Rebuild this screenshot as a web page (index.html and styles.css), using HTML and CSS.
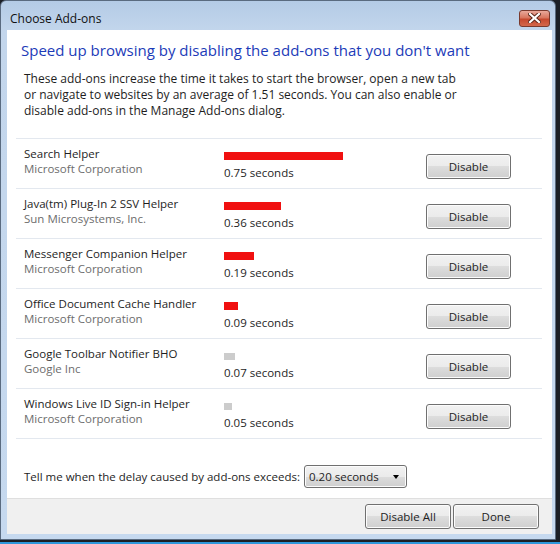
FILE: index.html
```html
<!DOCTYPE html>
<html lang="en">
<head>
    <meta charset="UTF-8">
    <title>Choose Add-ons</title>
    <link rel="stylesheet" href="styles.css">
</head>
<body>
    <div class="window">
        <div class="titlebar">
            <span class="title">Choose Add-ons</span>
            <button class="close-btn" title="Close">
                <svg width="13" height="10" viewBox="0 0 13 10">
                    <path d="M2 1 L11 9 M11 1 L2 9" stroke="#5a2418" stroke-width="4" stroke-linecap="square"/>
                    <path d="M2 1 L11 9 M11 1 L2 9" stroke="#ffffff" stroke-width="2.2" stroke-linecap="square"/>
                </svg>
            </button>
        </div>

        <div class="client">
            <div class="content">
                <h1 class="instruction">Speed up browsing by disabling the add-ons that you don't want</h1>
                <p class="desc">These add-ons increase the time it takes to start the browser, open a new tab or navigate to websites by an average of 1.51 seconds. You can also enable or disable add-ons in the Manage Add-ons dialog.</p>

                <div class="addons">
                    <div class="addon">
                        <div class="info">
                            <div class="name">Search Helper</div>
                            <div class="company">Microsoft Corporation</div>
                        </div>
                        <div class="timing">
                            <div class="bar slow" style="width: 119px"></div>
                            <div class="secs">0.75 seconds</div>
                        </div>
                        <button class="btn">Disable</button>
                    </div>
                    <div class="addon">
                        <div class="info">
                            <div class="name">Java(tm) Plug-In 2 SSV Helper</div>
                            <div class="company">Sun Microsystems, Inc.</div>
                        </div>
                        <div class="timing">
                            <div class="bar slow" style="width: 57px"></div>
                            <div class="secs">0.36 seconds</div>
                        </div>
                        <button class="btn">Disable</button>
                    </div>
                    <div class="addon">
                        <div class="info">
                            <div class="name">Messenger Companion Helper</div>
                            <div class="company">Microsoft Corporation</div>
                        </div>
                        <div class="timing">
                            <div class="bar slow" style="width: 30px"></div>
                            <div class="secs">0.19 seconds</div>
                        </div>
                        <button class="btn">Disable</button>
                    </div>
                    <div class="addon">
                        <div class="info">
                            <div class="name">Office Document Cache Handler</div>
                            <div class="company">Microsoft Corporation</div>
                        </div>
                        <div class="timing">
                            <div class="bar slow" style="width: 14px"></div>
                            <div class="secs">0.09 seconds</div>
                        </div>
                        <button class="btn">Disable</button>
                    </div>
                    <div class="addon">
                        <div class="info">
                            <div class="name">Google Toolbar Notifier BHO</div>
                            <div class="company">Google Inc</div>
                        </div>
                        <div class="timing">
                            <div class="bar fast" style="width: 11px"></div>
                            <div class="secs">0.07 seconds</div>
                        </div>
                        <button class="btn">Disable</button>
                    </div>
                    <div class="addon">
                        <div class="info">
                            <div class="name">Windows Live ID Sign-in Helper</div>
                            <div class="company">Microsoft Corporation</div>
                        </div>
                        <div class="timing">
                            <div class="bar fast" style="width: 8px"></div>
                            <div class="secs">0.05 seconds</div>
                        </div>
                        <button class="btn">Disable</button>
                    </div>
                </div>

                <div class="threshold">
                    <span>Tell me when the delay caused by add-ons exceeds:</span>
                    <div class="dropdown">
                        <span>0.20 seconds</span>
                        <span class="arrow"></span>
                    </div>
                </div>
            </div>

            <div class="footer">
                <button class="btn wide">Disable All</button>
                <button class="btn wide">Done</button>
            </div>
        </div>
    </div>
</body>
</html>
```

FILE: styles.css
```css
body {
    margin: 0;
    width: 560px;
    height: 544px;
    overflow: hidden;
    background: linear-gradient(to bottom, #1b1f26 0, #1b1f26 542px, #2e98dc 542px);
    font-family: "Open Sans", "Noto Sans", sans-serif;
    font-size: 11.5px;
    color: #1e1e1e;
}
.window {
    width: 556px;
    height: 540px;
    border: 1px solid #5a6b80;
    border-radius: 6px 6px 0 0;
    background: linear-gradient(to bottom, #b4cbe6 0, #c3d6ec 30px, #c6d9ef 100%);
    padding: 0 3px 5px 6px;
    box-sizing: border-box;
    display: flex;
    flex-direction: column;
}
.titlebar {
    height: 29px;
    display: flex;
    align-items: center;
    justify-content: space-between;
}
.title {
    font-size: 12px;
    margin-left: 3px;
    margin-top: 5px;
    color: #101010;
}
.close-btn {
    width: 31px;
    height: 17px;
    margin-top: 5px;
    margin-right: 2px;
    padding: 0;
    border: 1px solid #7a3a2e;
    border-radius: 3px;
    background: linear-gradient(to bottom, #e9a99b 0, #d8765f 45%, #c6492f 55%, #d3684c 100%);
    display: flex;
    align-items: center;
    justify-content: center;
}
.client {
    flex: 1;
    background: #ffffff;
    display: flex;
    flex-direction: column;
}
.content {
    flex: 1;
    padding: 0 10px 0 9px;
}
.instruction {
    margin: 10px 0 0 5px;
    font-size: 15px;
    font-weight: normal;
    line-height: 21px;
    color: #1c3bb8;
}
.desc {
    margin: 10px 0 19px 8px;
    font-size: 12px;
    line-height: 16px;
    width: 442px;
}
.addons {
    border-top: 1px solid #e3e8ef;
}
.addon {
    display: grid;
    grid-template-columns: 200px 202px 85px;
    height: 49px;
    border-bottom: 1px solid #e3e8ef;
    padding-left: 8px;
}
.info {
    padding-top: 7px;
    line-height: 15px;
}
.company {
    color: #6d6d6d;
}
.timing {
    padding-top: 13px;
}
.bar {
    height: 8px;
}
.bar.slow {
    background: #f01010;
}
.bar.fast {
    background: #cccccc;
    height: 7px;
    margin-top: 1px;
}
.secs {
    margin-top: 5px;
    line-height: 15px;
}
.btn {
    font-family: inherit;
    font-size: 11.5px;
    color: #1e1e1e;
    height: 25px;
    margin-top: 15px;
    padding: 0;
    border: 1px solid #707070;
    border-radius: 3px;
    background: linear-gradient(to bottom, #f2f2f2 0, #ebebeb 50%, #dddddd 50%, #cfcfcf 100%);
    box-shadow: inset 0 0 0 1px #fcfcfc;
}
.threshold {
    display: flex;
    align-items: center;
    gap: 4px;
    padding: 26px 0 0 8px;
}
.dropdown {
    width: 90px;
    height: 21px;
    border: 1px solid #707070;
    border-radius: 3px;
    background: linear-gradient(to bottom, #f2f2f2 0, #ebebeb 50%, #dddddd 50%, #cfcfcf 100%);
    box-shadow: inset 0 0 0 1px #fcfcfc;
    display: flex;
    align-items: center;
    justify-content: space-between;
    padding: 0 7px 0 4px;
}
.dropdown .arrow {
    width: 0;
    height: 0;
    border-left: 3.5px solid transparent;
    border-right: 3.5px solid transparent;
    border-top: 4px solid #000000;
}
.footer {
    height: 35px;
    border-top: 1px solid #dfdfdf;
    background: #f0f0f0;
    display: flex;
    justify-content: flex-end;
    align-items: flex-start;
    gap: 2px;
    padding-right: 13px;
}
.btn.wide {
    width: 86px;
    height: 25px;
    margin-top: 5px;
}
```
